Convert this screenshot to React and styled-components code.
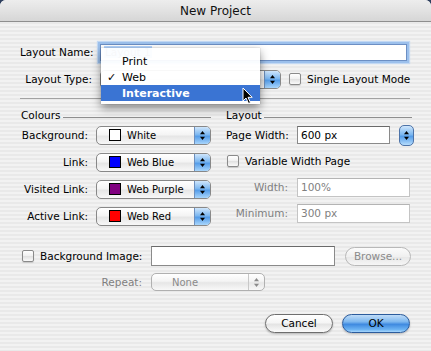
import React from "react";
import styled, { createGlobalStyle, css } from "styled-components";

const Global = createGlobalStyle`
  html, body { margin: 0; padding: 0; background: #2e3f5e; }
  body { font-family: "DejaVu Sans", "Liberation Sans", sans-serif; font-size: 10.5px; color: #000; }
  * { box-sizing: border-box; }
`;

const Window = styled.div`
  position: relative;
  width: 431px;
  height: 351px;
  overflow: hidden;
  border-radius: 6px 6px 0 0;
  background: repeating-linear-gradient(to bottom, #f2f2f2 0px, #f2f2f2 2px, #e9e9e9 2px, #e9e9e9 4px);
`;

const TitleBar = styled.div`
  height: 22px;
  display: flex;
  align-items: center;
  justify-content: center;
  font-size: 12px;
  color: #111;
  background: linear-gradient(to bottom, #ededed 0%, #e2e2e2 50%, #d6d6d6 100%);
  border-bottom: 1px solid #8e8e8e;
`;

const Content = styled.div`
  padding: 18px 21px 0 20px;
  display: flex;
  flex-direction: column;
`;

const Row = styled.div`
  display: flex;
  align-items: center;
  height: 20px;
  gap: ${p => p.$gap ?? 7}px;
  margin-top: ${p => p.$mt ?? 0}px;
`;

const Label = styled.div`
  width: ${p => p.$w}px;
  flex: none;
  text-align: ${p => p.$left ? "left" : "right"};
  color: ${p => p.$disabled ? "#7f7f7f" : "#000"};
  white-space: nowrap;
  margin-left: ${p => p.$ml ?? 0}px;
`;

const TextField = styled.div`
  position: relative;
  width: ${p => p.$w}px;
  height: ${p => p.$h ?? 19}px;
  flex: none;
  background: #fff;
  border: 1px solid ${p => p.$disabled ? "#c4c4c4" : "#8a8a8a"};
  border-top-color: ${p => p.$disabled ? "#b4b4b4" : "#6a6a6a"};
  display: flex;
  align-items: center;
  padding-left: 3px;
  color: ${p => p.$disabled ? "#7f7f7f" : "#000"};
  ${p => p.$focus && css`
    border-color: #6c8fc4;
    box-shadow: 0 0 0 2px #9cc0ec, 0 0 1px 3px #c2d8f3;
  `}
`;

const Selection = styled.span`
  background: #b5d5ff;
  color: #6a7a90;
  padding: 0 1px;
`;

const PopupBox = styled.div`
  position: relative;
  width: ${p => p.$w}px;
  height: ${p => p.$h ?? 19}px;
  flex: none;
  display: flex;
  align-items: center;
  margin-left: ${p => p.$ml ?? 0}px;
  border: 1px solid ${p => p.$disabled ? "#b0b0b0" : "#888"};
  border-radius: 5px;
  overflow: hidden;
  background: linear-gradient(to bottom, #ffffff 0%, #f4f4f4 45%, #e6e6e6 55%, #f8f8f8 100%);
  color: ${p => p.$disabled ? "#8a8a8a" : "#000"};
  font-size: 10px;
  padding-left: ${p => p.$swatch ? 12 : 20}px;
`;

const Swatch = styled.span`
  width: 12px;
  height: 12px;
  border: 1px solid #000;
  background: ${p => p.$c};
  margin-right: 6px;
  flex: none;
`;

const PopupText = styled.span`
  flex: 1;
`;

const ArrowPart = styled.div`
  width: 16px;
  height: 100%;
  flex: none;
  display: flex;
  align-items: center;
  justify-content: center;
  border-left: 1px solid ${p => p.$disabled ? "#c8c8c8" : "#6d8fbd"};
  background: ${p => p.$disabled
    ? "transparent"
    : "linear-gradient(to bottom, #cfe6fc 0%, #7cb7f0 45%, #559de9 55%, #a9d6fc 100%)"};
`;

const Arrows = ({ color = "#000" }) => (
  <svg width="7" height="11" viewBox="0 0 7 11">
    <path d="M3.5 1 L6 4.2 L1 4.2 Z" fill={color} />
    <path d="M3.5 10 L6 6.8 L1 6.8 Z" fill={color} />
  </svg>
);

const Popup = ({ w, h, swatch, text, disabled, ml }) => (
  <PopupBox $w={w} $h={h} $swatch={!!swatch} $disabled={disabled} $ml={ml}>
    {swatch && <Swatch $c={swatch} />}
    <PopupText>{text}</PopupText>
    <ArrowPart $disabled={disabled}><Arrows color={disabled ? "#8a8a8a" : "#000"} /></ArrowPart>
  </PopupBox>
);

const CheckBox = styled.span`
  width: 12px;
  height: 12px;
  flex: none;
  border: 1px solid #8a8a8a;
  border-radius: 2px;
  background: linear-gradient(to bottom, #ffffff 0%, #f0f0f0 50%, #e2e2e2 55%, #fafafa 100%);
  box-shadow: 0 1px 1px rgba(0,0,0,0.15);
  margin-left: ${p => p.$ml ?? 0}px;
`;

const Separator = styled.div`
  height: 1px;
  background: #a2a2a2;
  margin-top: 9px;
`;

const Columns = styled.div`
  display: flex;
  gap: 15px;
  margin-top: 8px;
`;

const Column = styled.div`
  width: ${p => p.$w}px;
  display: flex;
  flex-direction: column;
  gap: ${p => p.$gap}px;
`;

const SectionHeader = styled.div`
  display: flex;
  align-items: flex-end;
  height: 14px;
  margin-left: ${p => p.$ml ?? 0}px;
  margin-bottom: -${p => p.$gapFix}px;
`;

const HeaderLine = styled.div`
  flex: 1;
  height: 1px;
  background: #8e8e8e;
  margin: 0 0 3px 2px;
`;

const Stepper = styled.div`
  width: 15px;
  height: 21px;
  flex: none;
  border: 1px solid #4d73a8;
  border-radius: 5px;
  display: flex;
  align-items: center;
  justify-content: center;
  background: linear-gradient(to bottom, #cfe6fc 0%, #7cb7f0 45%, #559de9 55%, #b5dcfc 100%);
`;

const BottomGrid = styled.div`
  display: grid;
  grid-template-columns: 122px 184px 66px;
  grid-template-rows: 20px 20px;
  column-gap: 9px;
  row-gap: 6px;
  margin-top: 20px;
  align-items: center;
`;

const CheckLabel = styled.div`
  display: flex;
  align-items: center;
  gap: 6px;
  white-space: nowrap;
`;

const PillButton = styled.div`
  width: ${p => p.$w}px;
  height: ${p => p.$h}px;
  flex: none;
  margin-left: ${p => p.$ml ?? 0}px;
  border-radius: 10px;
  display: flex;
  align-items: center;
  justify-content: center;
  color: ${p => p.$disabled ? "#8a8a8a" : "#000"};
  border: 1px solid ${p => p.$primary ? "#2b5b9c" : p.$disabled ? "#b8b8b8" : "#6e6e6e"};
  background: ${p => p.$primary
    ? "linear-gradient(to bottom, #bfdcf8 0%, #7db7ef 40%, #3f8ae0 55%, #6cb3f3 85%, #a7d6fb 100%)"
    : p.$disabled
      ? "linear-gradient(to bottom, #fbfbfb 0%, #f0f0f0 50%, #e8e8e8 55%, #f6f6f6 100%)"
      : "linear-gradient(to bottom, #ffffff 0%, #f5f5f5 45%, #e4e4e4 55%, #fbfbfb 100%)"};
  box-shadow: ${p => p.$disabled ? "none" : "0 1px 2px rgba(0,0,0,0.25)"};
`;

const ButtonRow = styled.div`
  display: flex;
  justify-content: flex-end;
  gap: 9px;
  margin-top: 21px;
  height: 20px;
  align-items: center;
`;

const Menu = styled.div`
  position: absolute;
  left: 101px;
  top: 48px;
  width: 159px;
  padding: 5px 0 3px;
  background: rgba(255, 255, 255, 0.94);
  box-shadow: 0 4px 9px rgba(0,0,0,0.45), 0 0 1px rgba(0,0,0,0.3);
  font-size: 11px;
`;

const MenuItem = styled.div`
  height: 16px;
  display: flex;
  align-items: center;
  padding-left: 21px;
  position: relative;
  background: ${p => p.$active ? "#3a74d3" : "transparent"};
  color: ${p => p.$active ? "#fff" : "#000"};
  font-weight: ${p => p.$active ? "bold" : "normal"};
`;

const Check = styled.span`
  position: absolute;
  left: 6px;
  font-weight: bold;
`;

const Cursor = styled.svg`
  position: absolute;
  left: 242px;
  top: 87px;
`;

export default function App() {
  return (
    <>
      <Global />
      <Window>
        <TitleBar>New Project</TitleBar>
        <Content>
          <Row $mt={2}>
            <Label $w={73}>Layout Name:</Label>
            <TextField $w={307} $h={17} $focus><Selection>Layout 1</Selection></TextField>
          </Row>
          <Row $mt={7} $gap={0}>
            <Label $w={72}>Layout Type:</Label>
            <Popup w={181} ml={8} text="" />
            <CheckBox $ml={8} />
            <Label $w={110} $left $ml={6}>Single Layout Mode</Label>
          </Row>
          <Separator />
          <Columns>
            <Column $w={191} $gap={7}>
              <SectionHeader $ml={1} $gapFix={3}>
                Colours<HeaderLine />
              </SectionHeader>
              <Row $gap={8}>
                <Label $w={68}>Background:</Label>
                <Popup w={115} swatch="#ffffff" text="White" />
              </Row>
              <Row $gap={8}>
                <Label $w={68}>Link:</Label>
                <Popup w={115} swatch="#0000ff" text="Web Blue" />
              </Row>
              <Row $gap={8}>
                <Label $w={68}>Visited Link:</Label>
                <Popup w={115} swatch="#800080" text="Web Purple" />
              </Row>
              <Row $gap={8}>
                <Label $w={68}>Active Link:</Label>
                <Popup w={115} swatch="#ff0000" text="Web Red" />
              </Row>
            </Column>
            <Column $w={186} $gap={6}>
              <SectionHeader $gapFix={2}>
                Layout<HeaderLine />
              </SectionHeader>
              <Row $gap={9}>
                <Label $w={62} $left>Page Width:</Label>
                <TextField $w={93} $h={18}>600 px</TextField>
                <Stepper><Arrows /></Stepper>
              </Row>
              <Row $gap={6}>
                <CheckBox $ml={1} />
                <Label $w={120} $left>Variable Width Page</Label>
              </Row>
              <Row $gap={9}>
                <Label $w={62} $disabled>Width:</Label>
                <TextField $w={113} $disabled>100%</TextField>
              </Row>
              <Row $gap={9}>
                <Label $w={62} $disabled>Minimum:</Label>
                <TextField $w={113} $disabled>300 px</TextField>
              </Row>
            </Column>
          </Columns>
          <BottomGrid>
            <CheckLabel>
              <CheckBox $ml={2} />
              Background Image:
            </CheckLabel>
            <TextField $w={184} $h={20} />
            <PillButton $w={66} $h={19} $ml={1} $disabled>Browse...</PillButton>
            <Label $w={122} $disabled>Repeat:</Label>
            <Popup w={114} h={18} text="None" disabled />
          </BottomGrid>
          <ButtonRow>
            <PillButton $w={68} $h={19}>Cancel</PillButton>
            <PillButton $w={68} $h={19} $primary>OK</PillButton>
          </ButtonRow>
        </Content>
        <Menu>
          <MenuItem>Print</MenuItem>
          <MenuItem><Check>✓</Check>Web</MenuItem>
          <MenuItem $active>Interactive</MenuItem>
        </Menu>
        <Cursor width="12" height="18" viewBox="0 0 12 18">
          <path d="M1 1 L1 14 L4 11 L6.5 16.5 L8.5 15.6 L6 10.3 L10.2 10.3 Z" fill="#000" stroke="#fff" strokeWidth="1" />
        </Cursor>
      </Window>
    </>
  );
}
